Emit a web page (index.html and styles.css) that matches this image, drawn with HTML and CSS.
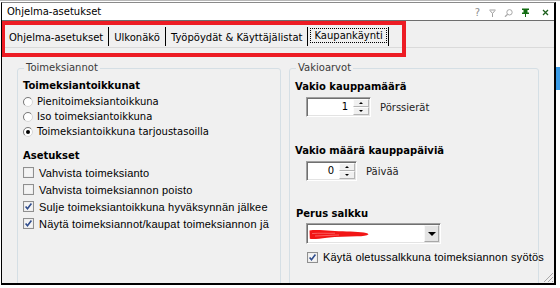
FILE: index.html
```html
<!DOCTYPE html>
<html lang="fi">
<head>
  <meta charset="UTF-8">
  <meta name="viewport" content="width=device-width, initial-scale=1.0">
  <title>Ohjelma-asetukset</title>
  <link rel="stylesheet" href="styles.css">
</head>
<body>
  <div class="desktop">
    <div class="window">
      <div class="titlebar">
        <span class="title">Ohjelma-asetukset</span>
        <div class="title-icons">
          <span class="ti-help">?</span>
          <svg class="ti-filter" width="7" height="8" viewBox="0 0 7 8"><path d="M0.5 1H6.5M1 1.5L3.5 4.5L6 1.5M3.5 4.5V8" fill="none" stroke="#a0a0a0"/></svg>
          <svg class="ti-search" width="9" height="8" viewBox="0 0 9 8"><circle cx="5.5" cy="3.3" r="2.7" fill="none" stroke="#a8a8a8"/><path d="M3.6 5.3L1 7.8" stroke="#a8a8a8" stroke-width="1.2"/></svg>
          <svg class="ti-pin" width="9" height="9" viewBox="0 0 9 9"><path d="M1 0.5H8V2H6.5V4.5H8V6H1V4.5H2.5V2H1Z" fill="#126c12"/><path d="M4.5 6V9" stroke="#126c12"/></svg>
          <svg class="ti-close" width="7" height="7" viewBox="0 0 7 7"><path d="M1 1L6 6M6 1L1 6" stroke="#1d5f1d" stroke-width="1.3"/></svg>
        </div>
      </div>

      <div class="tabs">
        <div class="tab">Ohjelma-asetukset</div>
        <div class="tab">Ulkonäkö</div>
        <div class="tab">Työpöydät &amp; Käyttäjälistat</div>
        <div class="tab tab-active"><span class="tab-focus">Kaupankäynti</span></div>
      </div>

      <div class="page">
        <fieldset class="group group-orders">
          <legend>Toimeksiannot</legend>
          <div class="heading">Toimeksiantoikkunat</div>
          <div class="radios">
            <label class="radio">
              <svg width="10" height="10" viewBox="0 0 10 10"><circle cx="5" cy="5" r="4.5" fill="#fff" stroke="#d6d6d6"/><path d="M8.2 1.8A4.5 4.5 0 0 0 1.8 8.2" fill="none" stroke="#7c7c7c"/></svg>
              Pienitoimeksiantoikkuna
            </label>
            <label class="radio">
              <svg width="10" height="10" viewBox="0 0 10 10"><circle cx="5" cy="5" r="4.5" fill="#fff" stroke="#d6d6d6"/><path d="M8.2 1.8A4.5 4.5 0 0 0 1.8 8.2" fill="none" stroke="#7c7c7c"/></svg>
              Iso toimeksiantoikkuna
            </label>
            <label class="radio">
              <svg width="10" height="10" viewBox="0 0 10 10"><circle cx="5" cy="5" r="4.5" fill="#fff" stroke="#d6d6d6"/><path d="M8.2 1.8A4.5 4.5 0 0 0 1.8 8.2" fill="none" stroke="#7c7c7c"/><circle cx="5" cy="5" r="2" fill="#000"/></svg>
              Toimeksiantoikkuna tarjoustasoilla
            </label>
          </div>

          <div class="heading heading-settings">Asetukset</div>
          <div class="checks">
            <label class="check">
              <svg width="11" height="11" viewBox="0 0 11 11"><rect x="0.5" y="0.5" width="10" height="10" fill="#e9e9e9" stroke="#8f8f8f"/><rect x="1.5" y="1.5" width="8" height="8" fill="#f4f4f4"/></svg>
              <span>Vahvista toimeksianto</span>
            </label>
            <label class="check">
              <svg width="11" height="11" viewBox="0 0 11 11"><rect x="0.5" y="0.5" width="10" height="10" fill="#e9e9e9" stroke="#8f8f8f"/><rect x="1.5" y="1.5" width="8" height="8" fill="#f4f4f4"/></svg>
              <span>Vahvista toimeksiannon poisto</span>
            </label>
            <label class="check">
              <svg width="11" height="11" viewBox="0 0 11 11"><rect x="0.5" y="0.5" width="10" height="10" fill="#e9e9e9" stroke="#8f8f8f"/><rect x="1.5" y="1.5" width="8" height="8" fill="#f4f4f4"/><path d="M2.6 5.4L4.5 7.8L8.4 2.6" fill="none" stroke="#2f4c8c" stroke-width="1.6"/></svg>
              <span>Sulje toimeksiantoikkuna hyväksynnän jälkee</span>
            </label>
            <label class="check">
              <svg width="11" height="11" viewBox="0 0 11 11"><rect x="0.5" y="0.5" width="10" height="10" fill="#e9e9e9" stroke="#8f8f8f"/><rect x="1.5" y="1.5" width="8" height="8" fill="#f4f4f4"/><path d="M2.6 5.4L4.5 7.8L8.4 2.6" fill="none" stroke="#2f4c8c" stroke-width="1.6"/></svg>
              <span>Näytä toimeksiannot/kaupat toimeksiannon jä</span>
            </label>
          </div>
        </fieldset>

        <fieldset class="group group-defaults">
          <legend>Vakioarvot</legend>
          <div class="heading heading-first">Vakio kauppamäärä</div>
          <div class="field-row">
            <div class="spin spin-wide">
              <span class="spin-value">1</span>
              <div class="spin-btns"><span class="spin-up"></span><span class="spin-down"></span></div>
            </div>
            <span class="unit">Pörssierät</span>
          </div>

          <div class="heading heading-days">Vakio määrä kauppapäiviä</div>
          <div class="field-row">
            <div class="spin spin-narrow">
              <span class="spin-value">0</span>
              <div class="spin-btns"><span class="spin-up"></span><span class="spin-down"></span></div>
            </div>
            <span class="unit">Päivää</span>
          </div>

          <div class="heading heading-portfolio">Perus salkku</div>
          <div class="combo">
            <svg class="redacted" width="60" height="11" viewBox="0 0 60 11"><path d="M0.5 1.5C6 0.6 14 1.2 22 1.8C32 2.4 44 2.6 52 3.2C56 3.6 59 4.2 59.5 5.2C58 6.8 54 7.2 48 7.2C38 7.4 28 7.6 18 8.8C10 9.8 4 10.4 0.8 9.8Z" fill="#f21515"/><path d="M3 4.6C10 3.8 18 4.6 26 4.2M6 7C14 6.4 22 6.6 30 6" fill="none" stroke="#ff8c8c" stroke-width="0.6"/></svg>
            <span class="combo-btn"></span>
          </div>
          <label class="check check-default">
            <svg width="11" height="11" viewBox="0 0 11 11"><rect x="0.5" y="0.5" width="10" height="10" fill="#e9e9e9" stroke="#8f8f8f"/><rect x="1.5" y="1.5" width="8" height="8" fill="#f4f4f4"/><path d="M2.6 5.4L4.5 7.8L8.4 2.6" fill="none" stroke="#2f4c8c" stroke-width="1.6"/></svg>
            <span>Käytä oletussalkkuna toimeksiannon syötös</span>
          </label>
        </fieldset>
      </div>

      <svg class="grip" width="12" height="12" viewBox="0 0 12 12"><path d="M11 2L2 11M11 6L6 11M11 10L10 11" stroke="#a8a8a8"/></svg>
      <div class="highlight"></div>
    </div>
    <div class="desk-edge"><div class="desk-blue"></div></div>
  </div>
</body>
</html>
```

FILE: styles.css
```css
body {
  margin: 0;
  width: 560px;
  height: 288px;
  overflow: hidden;
  background: #fff;
  font-family: "DejaVu Sans", sans-serif;
  font-size: 10px;
  color: #000;
}

.desktop {
  display: flex;
  height: 288px;
  padding: 2px 0 0 1px;
  box-sizing: border-box;
  box-shadow: inset 0 1px #b8b8b8;
}

.window {
  position: relative;
  width: 555px;
  height: 283px;
  box-sizing: border-box;
  border: 1px solid #000;
  border-top-color: #8a8a8a;
  border-right-width: 2px;
  border-bottom-width: 2px;
  background: #f0f0f0;
  display: flex;
  flex-direction: column;
  overflow: hidden;
}

/* title bar */
.titlebar {
  height: 17px;
  flex-shrink: 0;
  display: flex;
  align-items: center;
  padding-left: 5px;
  background: #fff;
  border-bottom: 1px solid #6e6e6e;
}

.title {
  line-height: 17px;
}

.title-icons {
  margin-left: auto;
  margin-top: 2px;
  display: flex;
  align-items: center;
  gap: 8px;
  padding-right: 5px;
}

.ti-help {
  color: #8c8c8c;
  line-height: 10px;
  margin-right: 1px;
}

.ti-close {
  margin-left: 4px;
}

/* tabs */
.tabs {
  height: 26px;
  flex-shrink: 0;
  display: flex;
  align-items: flex-start;
  padding-left: 2px;
  border-bottom: 1px solid #dadada;
}

.tab {
  margin-top: 6px;
  height: 19px;
  box-sizing: border-box;
  padding: 3px 5px 0;
  line-height: 15px;
  white-space: nowrap;
  border-right: 1px solid #000;
}

.tab-active {
  padding: 1px 1px 0 2px;
}

.tab-focus {
  display: block;
  border: 1px dotted #000;
  padding: 0 3px;
  line-height: 13px;
}

/* page */
.page {
  flex: 1;
  display: flex;
  gap: 8px;
  padding: 14px 0 0 15px;
}

.group {
  margin: 0;
  padding: 0 5px;
  height: 260px;
  box-sizing: border-box;
  min-width: 0;
  border: 1px solid #d5dfe5;
  border-radius: 3px;
}

.group legend {
  margin-left: 1px;
  padding: 0 2px;
  line-height: 12px;
  color: #3a3a3a;
}

.group-orders {
  width: 264px;
}

.group-defaults {
  width: 250px;
}

.heading {
  font-weight: bold;
  line-height: 14px;
  margin-top: 5px;
}

.heading-first {
  margin-top: 6px;
}

.heading-settings {
  margin-top: 10px;
}

.heading-days {
  margin-top: 27px;
}

.heading-portfolio {
  margin-top: 26px;
  padding-left: 1px;
}

.radios {
  margin-top: 1px;
}

.radio {
  display: flex;
  align-items: center;
  gap: 4px;
  height: 15px;
  white-space: nowrap;
}

.radio svg,
.check svg {
  flex-shrink: 0;
}

.checks {
  margin-top: 1px;
}

.check {
  display: flex;
  align-items: center;
  gap: 5px;
  height: 17px;
  white-space: nowrap;
  font-family: "Liberation Sans", Arial, sans-serif;
  font-size: 11px;
  letter-spacing: 0.2px;
}

.check-default {
  margin: 5px 0 0 12px;
  height: 16px;
}

/* spin edits */
.field-row {
  display: flex;
  align-items: center;
  gap: 9px;
  margin: 3px 0 0 11px;
}

.spin,
.combo {
  display: flex;
  height: 20px;
  box-sizing: border-box;
  padding: 1px;
  background: #fff;
  border: 1px solid;
  border-color: #a0a0a0 #fff #fff #a0a0a0;
  box-shadow: inset 1px 1px #707070, inset -1px -1px #e3e3e3;
}

.spin-wide {
  width: 65px;
}

.spin-narrow {
  width: 51px;
}

.spin-value {
  flex: 1;
  text-align: right;
  padding-right: 5px;
  line-height: 16px;
}

.spin-btns {
  width: 16px;
  display: flex;
  flex-direction: column;
}

.spin-up,
.spin-down {
  flex: 1;
  display: flex;
  align-items: center;
  justify-content: center;
  background: #f0f0f0;
  border: 1px solid #b4b4b4;
  border-top-color: #fcfcfc;
  border-left-color: #fcfcfc;
}

.spin-up::after {
  content: "";
  border-left: 2px solid transparent;
  border-right: 2px solid transparent;
  border-bottom: 2px solid #000;
}

.spin-down::after {
  content: "";
  border-left: 2px solid transparent;
  border-right: 2px solid transparent;
  border-top: 2px solid #000;
}

.unit {
  color: #222;
}

/* combo */
.combo {
  width: 135px;
  height: 21px;
  margin: 2px 0 0 11px;
  align-items: center;
  justify-content: space-between;
}

.redacted {
  margin-left: 1px;
  margin-top: 1px;
}

.combo-btn {
  align-self: stretch;
  width: 15px;
  display: flex;
  align-items: center;
  justify-content: center;
  background: #e4e4e4;
  border: 1px solid #a8a8a8;
  border-top-color: #f8f8f8;
  border-left-color: #f8f8f8;
  box-sizing: border-box;
}

.combo-btn::after {
  content: "";
  border-left: 4px solid transparent;
  border-right: 4px solid transparent;
  border-top: 4px solid #000;
}

/* overlays */
.grip {
  position: absolute;
  right: 0;
  bottom: 0;
}

.highlight {
  position: absolute;
  left: -1px;
  top: 18px;
  width: 405px;
  height: 36px;
  box-sizing: border-box;
  border: 4px solid #ed1c24;
  pointer-events: none;
}

.desk-edge {
  flex: 1;
}

.desk-blue {
  margin-top: 65px;
  height: 23px;
  background: #3a9be6;
}
```
